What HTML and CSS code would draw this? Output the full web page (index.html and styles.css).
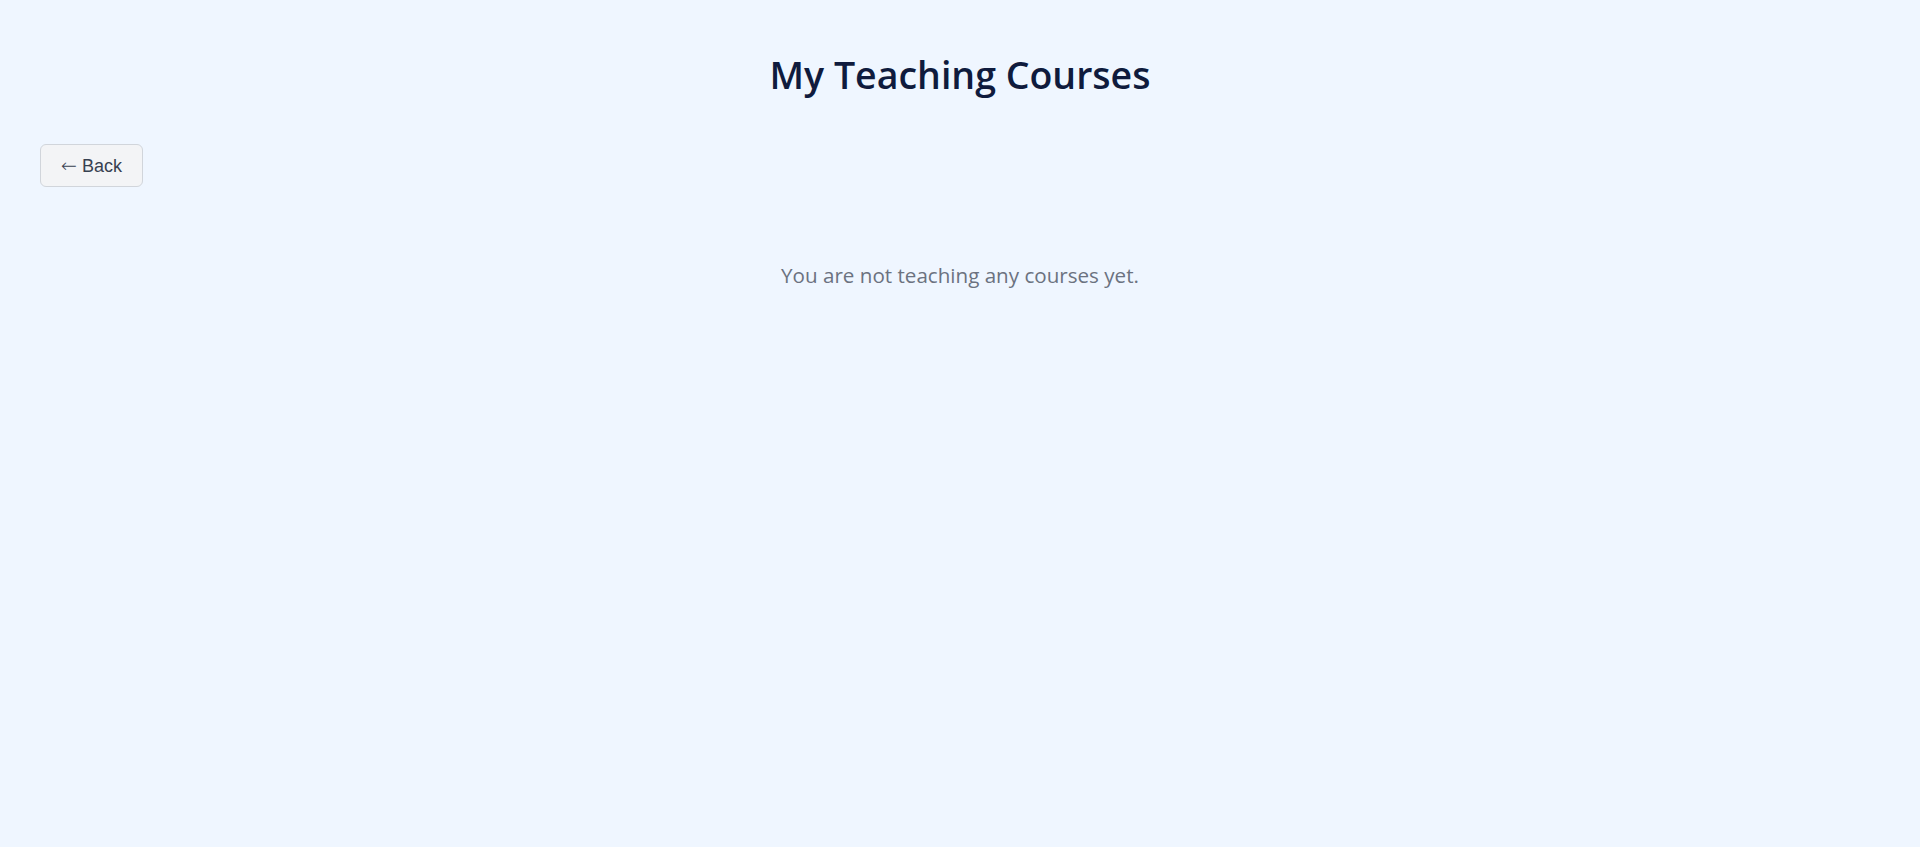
FILE: index.html
```html
<!DOCTYPE html>
<html>
<head>
<meta charset="utf-8">
<link rel="stylesheet" href="styles.css">
</head>
<body>
<div class="page">
  <h1 class="title">My Teaching Courses</h1>
  <div class="actions">
    <button class="back-btn"><span class="arrow">←</span> Back</button>
  </div>
  <p class="empty">You are not teaching any courses yet.</p>
</div>
</body>
</html>
```
FILE: styles.css
```css
html, body {
  margin: 0;
  padding: 0;
  background: #eff6ff;
  height: 100%;
}
.page {
  padding: 52px 40px 40px;
  font-family: "Open Sans", "Noto Sans", sans-serif;
}
.title {
  margin: 0 0 47px 0;
  text-align: center;
  font-size: 37.5px;
  font-weight: 600;
  color: #0f1b3d;
  line-height: 1.2;
}
.actions {
  display: flex;
}
.back-btn {
  font-family: "Liberation Sans", Arial, sans-serif;
  font-size: 18px;
  color: #374151;
  background: #f3f4f6;
  border: 1px solid #d1d5db;
  border-radius: 6px;
  padding: 0 20px;
  height: 43px;
  white-space: nowrap;
}
.arrow {
  font-family: "DejaVu Sans", sans-serif;
  font-size: 19px;
  font-weight: 300;
}
.empty {
  text-align: center;
  font-size: 20.6px;
  color: #6b7280;
  margin: 74px 0 0 0;
}
```
